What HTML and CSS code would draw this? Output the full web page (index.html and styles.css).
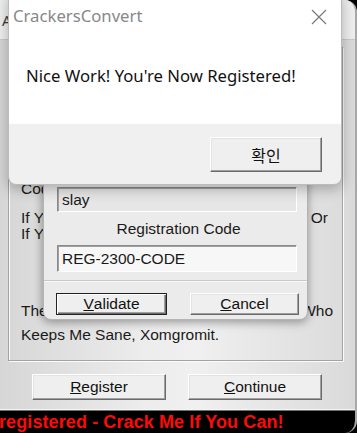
FILE: index.html
```html
<!DOCTYPE html>
<html>
<head>
<meta charset="utf-8">
<link rel="stylesheet" href="styles.css">
</head>
<body>
<div class="screen">
  <div class="main">
    <div class="titlebar"><span class="apptitle">About CrackersConvert</span></div>
    <div class="body">
      <div class="group">
        <div class="line l1"><span>Code By Xomgromit.</span></div>
        <div class="line l2"><span>If You Like It, Please Register</span><span class="r-or">Or</span></div>
        <div class="line l3"><span>If You Want, Crack It.</span></div>
        <div class="line l4"><span>The Best Regards To (you),</span><span class="r-who">Who</span></div>
        <div class="line l5"><span>Keeps Me Sane, Xomgromit.</span></div>
      </div>
      <div class="btnrow">
        <div class="btn mainbtn"><u>R</u>egister</div>
        <div class="btn mainbtn"><u>C</u>ontinue</div>
      </div>
    </div>
    <div class="status"><span class="marquee">registered - Crack Me If You Can!</span></div>
  </div>

  <div class="regdlg">
    <div class="field field-name">slay</div>
    <div class="reglabel">Registration Code</div>
    <div class="field field-code">REG-2300-CODE</div>
    <div class="sep"></div>
    <div class="regbtns">
      <div class="btn regbtn default"><u>V</u>alidate</div>
      <div class="btn regbtn"><u>C</u>ancel</div>
    </div>
  </div>

  <div class="msgbox">
    <div class="msg-top">
      <div class="msg-titlebar">
        <span class="msg-title">CrackersConvert</span>
        <svg class="msg-close" width="16" height="16" viewBox="0 0 16 16"><path d="M1 1 L15 15 M15 1 L1 15" stroke="#7a7a7a" stroke-width="1.2" fill="none"/></svg>
      </div>
      <div class="msg-text">Nice Work! You're Now Registered!</div>
    </div>
    <div class="msg-foot">
      <div class="btn okbtn">확인</div>
    </div>
  </div>
</div>
</body>
</html>
```

FILE: styles.css
```css
* { box-sizing: border-box; }
html, body { margin: 0; padding: 0; }
body {
  width: 357px; height: 433px; overflow: hidden; background: #000;
  font-family: "Liberation Sans", Arial, sans-serif;
}
.screen { position: relative; width: 357px; height: 433px; overflow: hidden; background: #000; }

/* main window */
.main {
  width: 357px; height: 433px;
  display: flex; flex-direction: column;
  background: #e6e6e6;
  border-radius: 0 12px 12px 0;
  border-right: 2px solid #a8a8a8;
  overflow: hidden;
}
.titlebar {
  height: 40px; flex: none;
  background: #efefef;
  border-bottom: 1px solid #c9c9c9;
  padding-left: 2px;
}
.apptitle { font-family: "Noto Sans", sans-serif; font-size: 15px; color: #3a3a3a; line-height: 40px; }
.body {
  flex: 1;
  padding: 7px 12px 0 8px;
  background: linear-gradient(90deg, #d6d6d6 0%, #ececec 40%, #f0f0f0 55%, #dadada 100%);
  border-bottom: 1px solid #f4f4f4;
}
.group {
  height: 314px;
  border: 1px solid #a3a3a3;
  box-shadow: inset 1px 1px 0 #fbfbfb, 1px 1px 0 #fbfbfb;
  padding: 132px 9px 0 12px;
  font-size: 15.5px; color: #1a1a1a;
}
.line { display: flex; justify-content: space-between; height: 17px; line-height: 17px; white-space: nowrap; }
.l2 { margin-top: 12px; }
.l3 { margin-top: -1px; }
.l4 { margin-top: 60px; }
.l5 { margin-top: 7px; }
.r-or { margin-right: 5px; }
.btnrow { display: flex; gap: 22px; padding: 13px 0 0 24px; }

.btn {
  display: flex; align-items: center; justify-content: center;
  background: #efefef;
  border: 1px solid;
  border-color: #ffffff #6a6a6a #6a6a6a #ffffff;
  box-shadow: inset -1px -1px 0 #a0a0a0, inset 1px 1px 0 #e3e3e3;
  color: #111;
  font-size: 15.5px;
}
.mainbtn { width: 134px; height: 26px; }
.status {
  height: 23px; flex: none; margin-top: auto;
  background: #000;
  border-top: 1px solid #6e6e6e;
  overflow: hidden; white-space: nowrap;
  font-weight: bold; font-size: 18px; color: #ff0a0a; line-height: 22px;
}
.marquee { display: inline-block; margin-left: -1px; letter-spacing: 0.1px; }

/* registration dialog */
.regdlg {
  position: absolute; left: 43px; top: 130px; width: 265px; height: 190px;
  background: #ebebeb;
  border: 1px solid #b4b4b4;
  border-radius: 0 0 8px 8px;
  box-shadow: 0 3px 10px rgba(0,0,0,0.28), -2px 0 8px rgba(0,0,0,0.12);
  padding-top: 56px;
  display: flex; flex-direction: column;
  font-size: 15.5px; color: #1a1a1a;
}
.field {
  margin-left: 13px; width: 240px;
  border: 1px solid; border-color: #8a8a8a #ffffff #ffffff #8a8a8a;
  box-shadow: inset 1px 1px 0 #a0a0a0;
  padding-left: 4px;
  display: flex; align-items: center;
}
.field-name { height: 25px; background: #e6e6e6; }
.reglabel { text-align: center; margin-top: 8px; line-height: 17px; padding-left: 6px; }
.field-code { height: 27px; margin-top: 8px; background: #f7f7f7; }
.sep { margin-top: 8px; height: 2px; border-top: 1px solid #c8c8c8; border-bottom: 1px solid #fafafa; }
.regbtns { display: flex; gap: 23px; padding: 11px 0 0 12px; }
.regbtn { width: 109px; height: 22px; }
.regbtn.default { border: 1px solid #222; box-shadow: inset 1px 1px 0 #fff, inset -1px -1px 0 #6a6a6a, inset -2px -2px 0 #a0a0a0; width: 111px; }

/* message box */
.msgbox {
  position: absolute; left: 8px; top: -10px; width: 334px; height: 195px;
  border: 1px solid #bcbcbc;
  border-radius: 8px;
  background: #f0f0f0;
  box-shadow: 0 4px 14px rgba(0,0,0,0.28);
  overflow: hidden;
  display: flex; flex-direction: column;
}
.msg-top { height: 133px; background: #fff; flex: none; }
.msg-titlebar { display: flex; justify-content: space-between; align-items: flex-start; padding: 13px 14px 0 4px; height: 48px; }
.msg-title { font-family: "Noto Sans", sans-serif; font-size: 16.7px; color: #888; line-height: 24px; }
.msg-close { margin-top: 5px; }
.msg-text { font-family: "Noto Sans", sans-serif; font-size: 16.7px; color: #111; padding-left: 17px; margin-top: 26px; line-height: 22px; }
.msg-foot { flex: 1; display: flex; justify-content: flex-end; padding: 13px 19px 0 0; align-items: flex-start; }
.okbtn { width: 112px; height: 35px; font-family: "Noto Sans CJK KR", sans-serif; font-size: 16px; }
```
